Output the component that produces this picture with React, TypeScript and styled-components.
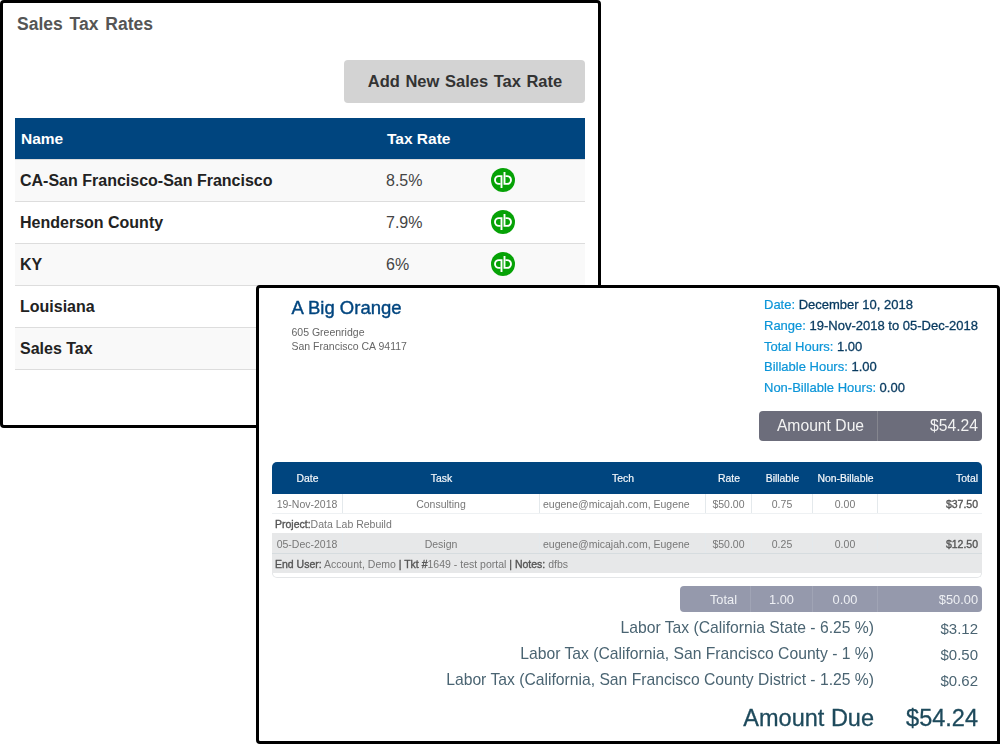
import React from "react";
import styled, { createGlobalStyle } from "styled-components";

const Global = createGlobalStyle`
  html, body { margin: 0; padding: 0; background: #fff; }
  body { font-family: "Liberation Sans", Arial, sans-serif; }
`;

const Canvas = styled.div`
  position: relative;
  width: 1000px;
  height: 744px;
  overflow: hidden;
  background: #fff;
`;

const RatesWindow = styled.section`
  position: absolute;
  left: 0;
  top: 0;
  width: 601px;
  height: 428px;
  box-sizing: border-box;
  border: 3px solid #000;
  border-radius: 4px;
  background: #fff;
  padding: 10px 13px 0 12px;
  display: flex;
  flex-direction: column;
`;

const RatesTitle = styled.h2`
  margin: 0 0 0 2px;
  font-size: 17.5px;
  line-height: 22px;
  font-weight: 700;
  color: #555;
  word-spacing: 2px;
`;

const ButtonRow = styled.div`
  display: flex;
  justify-content: flex-end;
  margin-top: 25px;
`;

const AddButton = styled.div`
  width: 241px;
  height: 43px;
  padding-left: 1px;
  box-sizing: border-box;
  border-radius: 4px;
  background: #d3d3d3;
  color: #333;
  font-size: 16.5px;
  font-weight: 700;
  display: flex;
  align-items: center;
  justify-content: center;
  word-spacing: 1px;
`;

const RatesTable = styled.div`
  margin-top: 15px;
  width: 570px;
  display: flex;
  flex-direction: column;
`;

const RatesHead = styled.div`
  height: 42px;
  background: #00457f;
  border-bottom: 1px solid #ddd;
  color: #fff;
  font-size: 15.5px;
  font-weight: 700;
  display: grid;
  grid-template-columns: 366px 1fr;
  align-items: center;
  padding-left: 6px;
  box-sizing: border-box;
`;

const RatesRow = styled.div<{ $shaded?: boolean }>`
  height: 42px;
  box-sizing: border-box;
  background: ${(p) => (p.$shaded ? "#f9f9f9" : "#fff")};
  border-bottom: 1px solid #ddd;
  display: grid;
  grid-template-columns: 366px 105px 1fr;
  align-items: center;
  padding-left: 5px;
`;

const RateName = styled.span`
  font-size: 16px;
  font-weight: 700;
  color: #222;
`;

const RateValue = styled.span`
  font-size: 16px;
  color: #444;
`;

const QbLogo = styled.svg`
  display: block;
  width: 24px;
  height: 24px;
  margin-top: -1px;
`;

const Qb = () => (
  <QbLogo viewBox="0 0 24 24">
    <circle cx="12" cy="12" r="12" fill="#06a206" />
    <path
      d="M9.3 15.9H7.9a3.9 3.9 0 0 1 0-7.8h2.6V20M14.7 8.1h1.4a3.9 3.9 0 0 1 0 7.8h-2.6V4"
      fill="none"
      stroke="#fff"
      strokeWidth="1.9"
    />
  </QbLogo>
);

const InvoiceWindow = styled.section`
  position: absolute;
  left: 256px;
  top: 285px;
  width: 744px;
  height: 459px;
  box-sizing: border-box;
  border: 3px solid #000;
  border-radius: 4px 4px 0 4px;
  background: #fff;
  padding: 0 0 0 13px;
  display: flex;
  flex-direction: column;
  filter: blur(0.25px);
`;

const InvoiceTop = styled.div`
  display: flex;
  justify-content: space-between;
  height: 123px;
`;

const Company = styled.div`
  padding: 9px 0 0 19.5px;
`;

const CompanyName = styled.h1`
  margin: 0;
  font-size: 18.5px;
  line-height: 22px;
  font-weight: 400;
  color: #00457f;
  -webkit-text-stroke: 0.4px #00457f;
`;

const Address = styled.div`
  margin-top: 6px;
  font-size: 10.5px;
  line-height: 14px;
  color: #666;
`;

const Meta = styled.div`
  width: 233px;
  padding-top: 7px;
`;

const MetaLine = styled.div`
  font-size: 13px;
  line-height: 20.8px;
  color: #0b95d8;
  -webkit-text-stroke: 0.2px #0b95d8;
  white-space: nowrap;
`;

const MetaValue = styled.span`
  color: #07395f;
  -webkit-text-stroke: 0.3px #07395f;
`;

const DueBar = styled.div`
  align-self: flex-end;
  margin-right: 15px;
  width: 223px;
  height: 30px;
  border-radius: 4px;
  background: #6c6d7b;
  color: #f2f2f2;
  font-size: 15.7px;
  display: grid;
  grid-template-columns: 119px 1fr;
  align-items: stretch;
`;

const DueLabel = styled.span`
  display: flex;
  align-items: center;
  justify-content: center;
  padding-left: 5px;
  border-right: 1px solid #85868f;
`;

const DueValue = styled.span`
  display: flex;
  align-items: center;
  justify-content: flex-end;
  padding-right: 4px;
`;

const columns = "71px 197px 166px 46px 61px 65px 1fr";

const WorkTable = styled.div`
  margin-top: 21px;
  width: 710px;
  border-radius: 5px;
  border: 1px solid #e4e6e8;
  border-top: 0;
  padding-bottom: 4px;
  box-sizing: border-box;
`;

const WorkHead = styled.div`
  display: grid;
  grid-template-columns: ${columns};
  height: 32px;
  margin: 0 -1px;
  border-radius: 5px 5px 0 0;
  background: #00457f;
  color: #f4f7fa;
  font-size: 10.4px;
  -webkit-text-stroke: 0.2px #f4f7fa;
  align-items: center;
`;

const HeadCell = styled.span<{ $right?: boolean }>`
  text-align: ${(p) => (p.$right ? "right" : "center")};
  padding-right: ${(p) => (p.$right ? "4px" : "0")};
`;

const WorkRow = styled.div<{ $shaded?: boolean; $tall?: boolean }>`
  display: grid;
  grid-template-columns: ${columns};
  height: ${(p) => (p.$tall ? "21px" : "20px")};
  margin: 0 -1px;
  background: ${(p) => (p.$shaded ? "#e7e8e9" : "#fff")};
  color: #777;
  font-size: 10.5px;
  border-bottom: 1px solid ${(p) => (p.$shaded ? "#d6dcdf" : "#eef1f3")};
  box-sizing: border-box;
`;

const WorkCell = styled.span<{ $strong?: boolean; $start?: boolean }>`
  display: flex;
  align-items: center;
  padding-top: 1px;
  justify-content: ${(p) => (p.$strong ? "flex-end" : p.$start ? "flex-start" : "center")};
  padding-left: ${(p) => (p.$start ? "3px" : "0")};
  padding-right: ${(p) => (p.$strong ? "4px" : "0")};
  border-right: ${(p) => (p.$strong ? "0" : "1px solid #e4e9ec")};
  color: ${(p) => (p.$strong ? "#555" : "#777")};
  -webkit-text-stroke: ${(p) => (p.$strong ? "0.35px #555" : "0")};
`;

const NoteRow = styled.div<{ $shaded?: boolean }>`
  height: 19px;
  margin: 0 -1px;
  background: ${(p) => (p.$shaded ? "#e7e8e9" : "#fff")};
  color: #777;
  font-size: 10.5px;
  line-height: 20px;
  padding-left: 3px;
`;

const NoteLabel = styled.span`
  color: #555;
  -webkit-text-stroke: 0.35px #555;
`;

const TotalsBar = styled.div`
  align-self: flex-end;
  margin: 8px 15px 3px 0;
  width: 302px;
  height: 26px;
  border-radius: 4px;
  background: #9599ac;
  color: #eef0f4;
  font-size: 12.8px;
  display: grid;
  grid-template-columns: 71px 62px 65px 1fr;
`;

const TotalCell = styled.span<{ $align: string; $pad?: number; $last?: boolean }>`
  display: flex;
  align-items: center;
  justify-content: ${(p) => p.$align};
  padding-right: ${(p) => p.$pad ?? 0}px;
  border-right: ${(p) => (p.$last ? "0" : "1px solid #a0a4b5")};
`;

const TaxRow = styled.div`
  display: grid;
  grid-template-columns: 1fr 104px;
  width: 706px;
  height: 26px;
  align-items: center;
  font-size: 15.7px;
  color: #4a6472;
  text-align: right;
`;

const TaxAmount = styled.span`
  font-size: 15px;
`;

const DueRow = styled.div`
  display: grid;
  grid-template-columns: 1fr 104px;
  width: 706px;
  margin-top: 10px;
  text-align: right;
  font-size: 23.5px;
  line-height: 30px;
  color: #1e4a5c;
  -webkit-text-stroke: 0.3px #1e4a5c;
`;

const taxes = [
  ["Labor Tax (California State - 6.25 %)", "$3.12"],
  ["Labor Tax (California, San Francisco County - 1 %)", "$0.50"],
  ["Labor Tax (California, San Francisco County District - 1.25 %)", "$0.62"],
];

const rates = [
  ["CA-San Francisco-San Francisco", "8.5%", true],
  ["Henderson County", "7.9%", false],
  ["KY", "6%", true],
  ["Louisiana", "", false],
  ["Sales Tax", "", true],
] as const;

export default function App() {
  return (
    <Canvas>
      <Global />
      <RatesWindow>
        <RatesTitle>Sales Tax Rates</RatesTitle>
        <ButtonRow>
          <AddButton>Add New Sales Tax Rate</AddButton>
        </ButtonRow>
        <RatesTable>
          <RatesHead>
            <span>Name</span>
            <span>Tax Rate</span>
          </RatesHead>
          {rates.map(([name, rate, shaded]) => (
            <RatesRow key={name} $shaded={shaded}>
              <RateName>{name}</RateName>
              <RateValue>{rate}</RateValue>
              {rate ? <Qb /> : null}
            </RatesRow>
          ))}
        </RatesTable>
      </RatesWindow>

      <InvoiceWindow>
        <InvoiceTop>
          <Company>
            <CompanyName>A Big Orange</CompanyName>
            <Address>
              605 Greenridge
              <br />
              San Francisco CA 94117
            </Address>
          </Company>
          <Meta>
            <MetaLine>Date: <MetaValue>December 10, 2018</MetaValue></MetaLine>
            <MetaLine>Range: <MetaValue>19-Nov-2018 to 05-Dec-2018</MetaValue></MetaLine>
            <MetaLine>Total Hours: <MetaValue>1.00</MetaValue></MetaLine>
            <MetaLine>Billable Hours: <MetaValue>1.00</MetaValue></MetaLine>
            <MetaLine>Non-Billable Hours: <MetaValue>0.00</MetaValue></MetaLine>
          </Meta>
        </InvoiceTop>
        <DueBar>
          <DueLabel>Amount Due</DueLabel>
          <DueValue>$54.24</DueValue>
        </DueBar>
        <WorkTable>
          <WorkHead>
            <HeadCell>Date</HeadCell>
            <HeadCell>Task</HeadCell>
            <HeadCell>Tech</HeadCell>
            <HeadCell>Rate</HeadCell>
            <HeadCell>Billable</HeadCell>
            <HeadCell>Non-Billable</HeadCell>
            <HeadCell $right>Total</HeadCell>
          </WorkHead>
          <WorkRow>
            <WorkCell>19-Nov-2018</WorkCell>
            <WorkCell>Consulting</WorkCell>
            <WorkCell $start>eugene@micajah.com, Eugene</WorkCell>
            <WorkCell>$50.00</WorkCell>
            <WorkCell>0.75</WorkCell>
            <WorkCell>0.00</WorkCell>
            <WorkCell $strong>$37.50</WorkCell>
          </WorkRow>
          <NoteRow>
            <NoteLabel>Project:</NoteLabel>Data Lab Rebuild
          </NoteRow>
          <WorkRow $shaded $tall>
            <WorkCell>05-Dec-2018</WorkCell>
            <WorkCell>Design</WorkCell>
            <WorkCell $start>eugene@micajah.com, Eugene</WorkCell>
            <WorkCell>$50.00</WorkCell>
            <WorkCell>0.25</WorkCell>
            <WorkCell>0.00</WorkCell>
            <WorkCell $strong>$12.50</WorkCell>
          </WorkRow>
          <NoteRow $shaded>
            <NoteLabel>End User:</NoteLabel> Account, Demo <NoteLabel>| Tkt #</NoteLabel>1649 - test portal <NoteLabel>| Notes:</NoteLabel> dfbs
          </NoteRow>
        </WorkTable>
        <TotalsBar>
          <TotalCell $align="flex-end" $pad={13}>Total</TotalCell>
          <TotalCell $align="center">1.00</TotalCell>
          <TotalCell $align="center">0.00</TotalCell>
          <TotalCell $align="flex-end" $pad={4} $last>$50.00</TotalCell>
        </TotalsBar>
        {taxes.map(([label, value]) => (
          <TaxRow key={label}>
            <span>{label}</span>
            <TaxAmount>{value}</TaxAmount>
          </TaxRow>
        ))}
        <DueRow>
          <span>Amount Due</span>
          <span>$54.24</span>
        </DueRow>
      </InvoiceWindow>
    </Canvas>
  );
}
